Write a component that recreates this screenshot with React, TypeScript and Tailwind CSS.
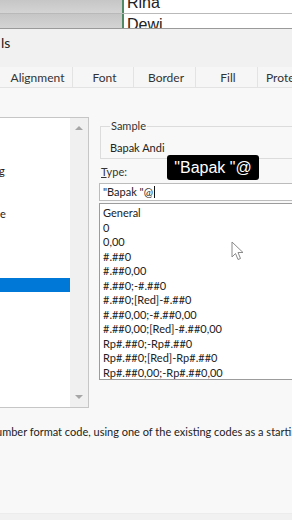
import React from "react";

const ui = { fontFamily: 'Lato, "Noto Sans", sans-serif' };

const formats = [
  "General",
  "0",
  "0,00",
  "#.##0",
  "#.##0,00",
  "#.##0;-#.##0",
  "#.##0;[Red]-#.##0",
  "#.##0,00;-#.##0,00",
  "#.##0,00;[Red]-#.##0,00",
  "Rp#.##0;-Rp#.##0",
  "Rp#.##0;[Red]-Rp#.##0",
  "Rp#.##0,00;-Rp#.##0,00",
];

const tabs = [
  { label: "Alignment", w: "w-[73px]" },
  { label: "Font", w: "w-[61px]" },
  { label: "Border", w: "w-[62px]" },
  { label: "Fill", w: "w-[62px]" },
];

function SheetRow({ name, shift, last }: { name: string; shift: string; last?: boolean }) {
  return (
    <div className={`flex ${last ? "h-[15px] border-b border-[#9a9a9a]" : "h-[14px] border-b border-[#b9b9b9]"}`}>
      <div className="w-[124px] bg-gradient-to-b from-[#c6c6c6] to-[#d4d4d4] border-r-2 border-[#4f8a63]" />
      <div className="flex-1 bg-white overflow-hidden">
        <div
          className={`pl-[3px] text-[16px] leading-[16px] text-[#222] ${shift}`}
          style={{ fontFamily: '"Liberation Sans", Arial, sans-serif' }}
        >
          {name}
        </div>
      </div>
    </div>
  );
}

function Cursor() {
  return (
    <svg width="13" height="20" viewBox="0 0 13 20" className="absolute left-[231px] top-[241px]">
      <path
        d="M1 1 L1 16 L4.5 12.5 L7 18.5 L9.5 17.5 L7 11.5 L12 11.5 Z"
        fill="#ffffff"
        stroke="#8a8a8a"
        strokeWidth="1"
        strokeLinejoin="round"
      />
    </svg>
  );
}

export default function App() {
  return (
    <div className="relative w-[292px] h-[520px] overflow-hidden bg-[#f4f4f4]" style={ui}>
      <SheetRow name="Rina" shift="-mt-[5px]" />
      <SheetRow name="Dewi" shift="mt-[3px]" last />

      {/* dialog title, cut at the left edge */}
      <div className="h-[38px] bg-[#f1f1f1] pt-[5px] text-[14px] leading-[17px] text-[#222] pl-px">
        ls
      </div>

      {/* tabs */}
      <div className="flex h-[21px] bg-[#f6f6f6] border-b border-[#e3e3e3] text-[12px] text-[#333] leading-[21px]">
        {tabs.map((t) => (
          <div key={t.label} className={`${t.w} shrink-0 text-center border-r border-[#e3e3e3] pl-[3px]`}>
            {t.label}
          </div>
        ))}
        <div className="pl-[8px] whitespace-nowrap">Protection</div>
      </div>

      {/* content */}
      <div className="flex bg-[#f8f8f8] pt-[29px] h-[322px]">
        <div className="w-[89px] h-[291px] shrink-0 bg-white border border-l-0 border-[#c6c6c6] flex">
          <div className="flex-1 relative text-[11px] text-[#222] overflow-hidden">
            <div className="absolute -left-px top-[45px]">g</div>
            <div className="absolute left-0 top-[88px]">e</div>
            <div className="absolute left-0 right-0 top-[160px] h-[14px] bg-[#0078d7]" />
          </div>
          <div className="w-[18px] bg-[#f0f0f0] flex flex-col items-center justify-between py-[8px]">
            <span className="w-0 h-0 border-l-[4px] border-r-[4px] border-b-[4px] border-l-transparent border-r-transparent border-b-[#a6a6a6]" />
            <span className="w-0 h-0 border-l-[4px] border-r-[4px] border-t-[4px] border-l-transparent border-r-transparent border-t-[#a6a6a6]" />
          </div>
        </div>

        <div className="ml-[10px] flex-1 mt-[3px] min-w-0">
          <fieldset className="border border-[#dcdcdc] border-r-0 h-[39px] pl-[9px] ml-[1px]">
            <legend className="text-[11px] text-[#333] px-[1px] leading-[12px]">Sample</legend>
            <div className="text-[11px] text-[#222] leading-[14px] mt-[9px]">Bapak Andi</div>
          </fieldset>

          <div className="text-[11px] text-[#333] mt-[6px] leading-[14px] pl-[2px]">
            <span className="underline">T</span>ype:
          </div>

          <div className="mt-[4px] h-[18px] bg-white border border-[#bcbcbc] border-r-0 flex items-center pl-[3px] text-[11px] text-[#222]">
            "Bapak "@<span className="inline-block w-px h-[12px] bg-[#111] ml-px" />
          </div>

          <div className="mt-[2px] h-[177px] bg-white border border-[#9c9c9c] border-r-0 pl-[3px] pt-[2px] text-[11px] leading-[14.5px] text-[#222]">
            {formats.map((f) => (
              <div key={f} className="whitespace-nowrap">{f}</div>
            ))}
          </div>
        </div>
      </div>

      <div className="bg-[#f8f8f8] h-[103px] pt-[14px] text-[11px] text-[#222] whitespace-nowrap -ml-[61px]">
        Select the number format code, using one of the existing codes as a starting point.
      </div>
      <div className="bg-[#f1f1f1] h-[20px] border-t border-[#ececec]" />

      {/* tooltip */}
      <div
        className="absolute left-[167px] top-[155px] w-[92px] h-[25px] rounded-[3px] bg-black text-white text-[16px] leading-[25px] text-center"
        style={{ fontFamily: '"Liberation Sans", Arial, sans-serif' }}
      >
        "Bapak "@
      </div>

      <Cursor />
    </div>
  );
}
